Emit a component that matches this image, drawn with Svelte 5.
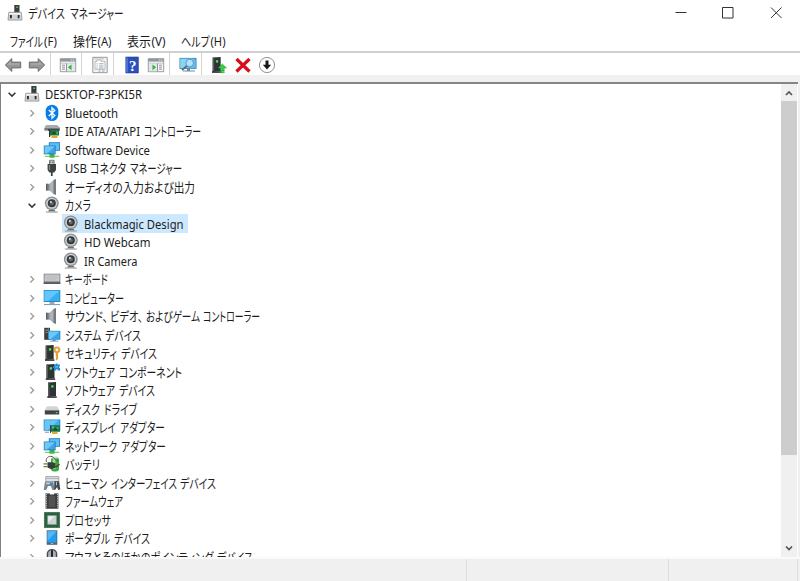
<script lang="ts">
  // [text, x offset, width]
  type Run = [string, number, number];

  interface Row {
    icon: string;
    runs: Run[];
    level?: number;
    open?: boolean;
    selected?: boolean;
  }

  const rows: Row[] = [
    { icon: 'computer-root', runs: [['DESKTOP-F3PKI5R', 0, 97]], level: 0, open: true },
    { icon: 'bluetooth', runs: [['Bluetooth', 0, 53]] },
    { icon: 'ide', runs: [['IDE ATA/ATAPI', 0, 75], ['コントローラー', 79, 57]] },
    { icon: 'network', runs: [['Software Device', 0, 85]] },
    { icon: 'usb', runs: [['USB', 0, 22], ['コネクタ', 25, 36], ['マネージャー', 65, 52]] },
    { icon: 'speaker', runs: [['オーディオの入力および出力', 0, 130]] },
    { icon: 'camera', runs: [['カメラ', 0, 26]], open: true },
    { icon: 'camera', runs: [['Blackmagic Design', 0, 99.5]], level: 2, selected: true },
    { icon: 'camera', runs: [['HD Webcam', 0, 66.5]], level: 2 },
    { icon: 'camera', runs: [['IR Camera', 0, 53.5]], level: 2 },
    { icon: 'keyboard', runs: [['キーボード', 0, 43]] },
    { icon: 'monitor', runs: [['コンピューター', 0, 59]] },
    { icon: 'speaker', runs: [['サウンド、', 0, 43], ['ビデオ、', 45, 33], ['およびゲーム', 81, 54], ['コントローラー', 138, 57]] },
    { icon: 'system', runs: [['システム', 0, 36.5], ['デバイス', 40, 36]] },
    { icon: 'security', runs: [['セキュリティ', 0, 52], ['デバイス', 56, 36]] },
    { icon: 'component', runs: [['ソフトウェア', 0, 50], ['コンポーネント', 54, 63]] },
    { icon: 'server', runs: [['ソフトウェア', 0, 50], ['デバイス', 54, 36]] },
    { icon: 'disk', runs: [['ディスク', 0, 35], ['ドライブ', 39, 33]] },
    { icon: 'display', runs: [['ディスプレイ', 0, 51], ['アダプター', 55, 45]] },
    { icon: 'network', runs: [['ネットワーク', 0, 52], ['アダプター', 56, 45]] },
    { icon: 'battery', runs: [['バッテリ', 0, 35]] },
    { icon: 'hid', runs: [['ヒューマン', 0, 42], ['インターフェイス', 46, 66], ['デバイス', 115, 36]] },
    { icon: 'firmware', runs: [['ファームウェア', 0, 58]] },
    { icon: 'cpu', runs: [['プロセッサ', 0, 46]] },
    { icon: 'portable', runs: [['ポータブル', 0, 45], ['デバイス', 49, 36]] },
    { icon: 'mouse', runs: [['マウスとそのほかのポインティング', 0, 148.5], ['デバイス', 152, 36]] },
  ];

  const menus: { runs: Run[]; width: number }[] = [
    { runs: [['ファイル', 0, 33], ['(F)', 34, 13]], width: 63 },
    { runs: [['操作', 0, 24], ['(A)', 24.5, 14]], width: 54.5 },
    { runs: [['表示', 0, 24], ['(V)', 24.5, 14]], width: 54 },
    { runs: [['ヘルプ', 0, 29], ['(H)', 29.5, 15]], width: 60 },
  ];

  const tools = [
    'back', 'forward', '|', 'tree', '|', 'properties', '|', 'help', 'action',
    '|', 'scan', '|', 'update', 'remove', 'down',
  ];
</script>

{#snippet label(runs: Run[])}
  {@const last = runs[runs.length - 1]}
  <svg class="label" width={last[1] + last[2]} height="18">
    {#each runs as [text, x, width]}
      <text
        {x}
        y="13.8"
        class:kana={text.charCodeAt(0) > 0x3000}
        textLength={width}
        lengthAdjust="spacingAndGlyphs">{text}</text>
    {/each}
  </svg>
{/snippet}

{#snippet towerShape()}
  <path fill="#303335" d="M4 .6l8-.6v14l-8 .8z" />
  <path fill="#565b5d" d="M4 .6l1.5-.1v14L4 14.8z" />
  <path fill="#202224" d="M3.3 14.3h9.4v1.5H3.3z" />
  <path fill="#45e84e" d="M7.2 3.2h2.3v2.4H7.2z" />
{/snippet}

{#snippet icon(name: string, size = 16)}
  <svg class="icon" width={size} height={size} viewBox="0 0 16 16">
    {#if name === 'computer-root'}
      <path fill="#3a3d3e" d="M7 0h5.5v8H7z" />
      <path fill="#777" d="M7 0h1v8H7z" />
      <path fill="#45d94d" d="M9.3 1.5h1.6v1.6H9.3z" />
      <path fill="#d0d3d4" stroke="#8d9193" stroke-width=".8" d="M1.8 7.3h12.4l.8 7.8H1z" />
      <path fill="#f4f4f4" d="M2.2 8h11.4l.3 1.4H2z" />
      <path fill="#26292a" d="M3 9.9h1.8v3.3H3zM10.7 9.9h1.8v3.3h-1.8z" />
    {:else if name === 'bluetooth'}
      <rect x="1.7" y="-.3" width="12.6" height="16.4" rx="6.3" fill="#087dea" />
      <path fill="none" stroke="#fff" stroke-width="1.3" d="M4.8 5l6 5.5L8 13.2V2.8l2.8 2.7-6 5.5" />
    {:else if name === 'ide'}
      <path fill="#a9acae" d="M2 2h11l3 2.5v3H.5v-3z" />
      <path fill="#777b7d" d="M.5 5h15v2.5H.5z" />
      <path fill="#35393b" d="M4 6.2h11.5v1.5H4z" />
      <path fill="#137b42" d="M5.5 7.5H15v5H5.5z" />
      <path fill="#0b5430" d="M8.5 8.8h3v2.4h-3z" />
      <path fill="#65b673" d="M12.5 8.5h1.3v2.8h-1.3z" />
      <path fill="#e9a52a" d="M7.5 12.5h6V15h-6z" />
      <path fill="#333" d="M5 7h1.2v7H5z" />
    {:else if name === 'network'}
      <path fill="#75cd65" d="M.8 13.7h14.4v1.2H.8z" />
      <path fill="#3db54a" d="M5.5 11h5v4.7h-5z" />
      <path fill="#2383c4" d="M4.8.2H16v8.6H4.8z" />
      <path fill="#5fbdf2" d="M5.7 1.1h9.5V8H5.7z" />
      <path fill="#1d75b5" d="M-.2 3.5h11.8v8.8H-.2z" />
      <path fill="#3da6ea" d="M.6 4.3h10.2v7.2H.6z" />
      <path fill="#70c7f6" d="M.6 4.3h10.2L3 11.5H.6z" />
    {:else if name === 'usb'}
      <path fill="#e5e5e5" stroke="#56595a" stroke-width=".8" d="M5.5.3h4.6v4H5.5z" />
      <path fill="#333" d="M6.4 1.6h.9v1.3h-.9zM8.4 1.6h.9v1.3h-.9z" />
      <path fill="#3e4243" d="M3.6 4h8.4v6l-1.8 2.5H5.4L3.6 10z" />
      <path fill="#7b8082" d="M4.8 5h1.4v5.5L4.8 9.4z" />
      <path fill="#343738" d="M6.9 12h1.7v4H6.9z" />
    {:else if name === 'speaker'}
      <path fill="#83888b" d="M2 4.8h4.5v6.8H2z" />
      <path fill="#5b6064" d="M2 4.8h1.5v6.8H2z" />
      <path fill="#aeb3b7" d="M5.5 4.8L10 .6v15l-4.5-4z" />
      <path fill="#747a7f" d="M9.5.9L12 0v16l-2.5-.9z" />
    {:else if name === 'camera'}
      <circle cx="7.8" cy="6.3" r="6.9" fill="#8d9091" />
      <circle cx="7.8" cy="6.3" r="5.5" fill="#d0d2d2" />
      <circle cx="7.8" cy="6.3" r="4" fill="#34393c" />
      <circle cx="7.8" cy="6.3" r="2" fill="#5d6a72" />
      <circle cx="6.8" cy="5.1" r="1" fill="#d5e3e9" />
      <path fill="#6c7071" d="M5 13h5.6l1 1.4H4z" />
      <path fill="#9c9e9f" d="M1.8 14.5h12v1.1h-12z" />
    {:else if name === 'keyboard'}
      <path fill="#777c80" d="M-.3 2.7h16.6v10.2H-.3z" />
      <path fill="#c9cccf" d="M.5 3.4h15v7H.5z" />
      <path stroke="#a5a9ad" stroke-width=".7" stroke-dasharray="1.3 .6" d="M1.5 5h13M1.5 6.9h13M3 8.8h10" />
      <path fill="#53585c" d="M-.3 11.4h16.6v1.5H-.3z" />
    {:else if name === 'monitor'}
      <path fill="#2785bf" d="M-.3 0h16.6v12H-.3z" />
      <path fill="#37aef1" d="M.5.8h15v10.3H.5z" />
      <path fill="#63c5fa" d="M.5.8h15L4 11.1H.5z" />
      <path fill="#9aaab5" d="M5.5 12h5v2h-5z" />
      <path fill="#7696ab" d="M0 14.1h16v1H0z" />
    {:else if name === 'system'}
      <path fill="#3a3e41" d="M.2.8H6v12H.2z" />
      <path fill="#8c9295" d="M1.2 2.8h3.8v1H1.2zM1.2 5h3.8v.8H1.2z" />
      <path fill="#54d34f" d="M3.8 1.4H5v1H3.8z" />
      <path fill="#217db7" d="M4 3.8h12.3v8.9H4z" />
      <path fill="#35a7e9" d="M4.8 4.6h10.7v7.3H4.8z" />
      <path fill="#6ac7f7" d="M4.8 4.6h10.7L7 11.9H4.8z" />
      <path fill="#5b8ba8" d="M8.5 12.7h3v1h3v.8H6v-.8h2.5z" />
    {:else if name === 'security'}
      <g transform="translate(-2.3)">{@render towerShape()}</g>
      <circle cx="12.9" cy="4.8" r="2.4" fill="none" stroke="#dfa03a" stroke-width="2" />
      <path fill="#dfa03a" d="M11.8 7.2h2.2v6.9L12.7 15.4l-1.1-1 .8-1-.8-.9.8-.8-.7-.8z" />
    {:else if name === 'component'}
      <g transform="translate(-1.5)">{@render towerShape()}</g>
      <path fill="#2389d6" d="M10 .6h1.7V-.6h1.8V.6h2.4v1.8h-.9v1.3h1.1v2.7h-2.4V5.2h-1.4v1.2H10V4.1H8.7V2.4H10z" />
      <path fill="#7fc2f1" d="M11.3 2.2h2.5v1.3h-2.5z" />
    {:else if name === 'server'}
      {@render towerShape()}
    {:else if name === 'disk'}
      <path fill="#d2d5d6" d="M3 5.3h10l2.5 4H.5z" />
      <path fill="#3f4345" d="M.8 9.2h14.4v4.3H.8z" />
      <path fill="#7e8385" d="M1.3 9.2h13.4v.8H1.3z" />
      <path fill="#54d957" d="M11.8 11h1.7v1.2h-1.7z" />
    {:else if name === 'display'}
      <path fill="#2380ba" d="M-.3.5h16.6v11.2H-.3z" />
      <path fill="#3caef0" d="M.5 1.3h15v9.6H.5z" />
      <path fill="#69c7f8" d="M.5 1.3h14L4 10.9H.5z" />
      <path fill="#167449" d="M6.5 6.3H16v6.5H6.5z" />
      <path fill="#69b880" d="M8 7.5h2.4v2H8zM12.3 8.3h2.5v1.2h-2.5z" />
      <path fill="#0d4e30" d="M9.8 9.3h3v2.2h-3z" />
      <path fill="#dfab38" d="M8 12.8h5.6v2.2H8z" />
      <path fill="#343a3d" d="M6 6h.9v8H6z" />
      <path fill="#7896a8" d="M1 12.7h4v1H1z" />
    {:else if name === 'battery'}
      <rect x="7" y="1.2" width="8" height="14.2" rx="3" fill="#38ad3c" />
      <path fill="#a5e195" d="M8.8 2.6h2.6v10.5H8.8z" />
      <path fill="#d9dedb" d="M8.3.4h5v2h-5z" />
      <path fill="none" stroke="#535856" d="M2.5 6C1 3 4.7-1 8.3.7s2.2 4.8 6 3.8" />
      <path fill="#383e3b" d="M3.5 6.2h4L11.4 7v4.8l-4.2 1.5L3.5 11.5z" />
      <path stroke="#7f7640" stroke-width="1.3" d="M-.5 7.8h4M-.5 10.6h4" />
      <path fill="none" stroke="#444" stroke-width="1.4" d="M10 10.5h2.5l3-2.4" />
    {:else if name === 'hid'}
      <path fill="#dde1e4" stroke="#8a9299" stroke-width=".8" d="M1.8 1.6h13v5h-13z" />
      <path stroke="#a3abb2" stroke-width=".8" d="M2.5 3.5H14" />
      <path fill="#7b858d" d="M1 6.7h8.3l1.4 8.3H8.5l-1.7-4H4L2.2 15H-.3z" />
      <path fill="#c6d0d7" d="M2 7.6h6v1.6H2z" />
      <circle cx="6.9" cy="9" r="1.2" fill="#168de0" />
      <path fill="#424950" d="M10.3 6.2h4.8l1.2 8.2-2.2.6-1-3-2 3-1-.6z" />
      <path fill="#b6bfc5" d="M12 7h1v3.2h-1z" />
    {:else if name === 'firmware'}
      <path fill="#3c3d3d" d="M1.6.3h3.7l1 1.2h3.4l1-1.2h3.7v15.4H1.6z" />
      <path stroke="#c2c3c3" stroke-width="1" stroke-dasharray="1 .8" d="M2.5 1v14.2M13.5 1v14.2" />
      <path fill="#525252" d="M4.7 3h6.6v11H4.7z" />
      <path stroke="#969696" stroke-width=".7" d="M2 .5h3.3l1.2 1.2h3L10.7.5H14" fill="none" />
    {:else if name === 'cpu'}
      <path fill="#28614a" d="M0 0h16v16H0z" />
      <path fill="none" stroke="#b7ad68" stroke-width=".7" stroke-dasharray=".8 .7" d="M.3.3h15.4v15.4H.3z" />
      <path fill="#d0d3cf" stroke="#9ba99f" stroke-width=".5" d="M3.6 3.6h8.8v8.8H3.6z" />
      <path fill="#eee" d="M4.2 4.2h6.5l-6.5 6z" />
    {:else if name === 'portable'}
      <path fill="#4f6577" d="M2.7.3h10.6v14.5H2.7z" />
      <path fill="#209df0" d="M3.5 1.3h9v11.3h-9z" />
      <path fill="#52b9f8" d="M3.5 1.3h9l-9 9.7z" />
      <path fill="#c6d1d9" d="M6.8 13.3h2.4v.7H6.8z" />
    {:else if name === 'mouse'}
      <rect x="2.7" y="0" width="10.6" height="17" rx="5" fill="#454c52" />
      <path fill="#a7b0b8" d="M4.3 3L7 1v7H4zM9 1l2.7 2 .2 5H9z" />
      <path fill="#24282b" d="M7 1.5h2v6H7z" />
    {:else if name === 'back' || name === 'forward'}
      <g transform={name === 'forward' ? 'matrix(-1 0 0 1 16 0)' : undefined}>
        <path fill="#969696" stroke="#6c6c6c" d="M.3 8l6.5-6.4v3.5h8.9v5.8H6.8v3.5z" stroke-linejoin="round" />
        <path fill="#aaa" d="M2.5 7.7L5.8 4.5v1.7h8.5v1.5z" />
      </g>
    {:else if name === 'tree' || name === 'action'}
      <path fill="#f7f8f8" stroke="#7e868d" stroke-width=".8" d="M.3 1.7h15.4v13H.3z" />
      <path fill="#8c97a1" d="M.3 1.7h15.4v2.9H.3z" />
      <path fill="#fff" d="M11.2 2.5h1v1h-1zM13.2 2.5h1v1h-1z" />
      <path stroke="#b0b6bb" stroke-width=".8" d="M1 6.2h14" />
      {#if name === 'tree'}
        <path fill="#e2e7ea" d="M7 6.7h8v7.5H7z" />
        <path stroke="#8b969f" d="M2 8.2h3M2 10.2h3M2 12.2h3M6.5 6.5v8" />
        <path fill="#28b42c" d="M11.5 7.5v5.7L8 10.3z" />
      {:else}
        <path fill="#e2e7ea" d="M1 6.7h8v7.5H1z" />
        <path stroke="#8b969f" d="M11 8.2h3M11 10.2h3M11 12.2h3M9.5 6.5v8" />
        <path fill="#28b42c" d="M4.5 7.5v5.7L8 10.3z" />
      {/if}
    {:else if name === 'properties'}
      <path fill="#f5f5f5" stroke="#8a8d90" stroke-width=".9" d="M.8.3h14.4v15.4H.8z" />
      <path fill="#fff" stroke="#a3a7aa" stroke-width=".8" d="M3 4.3h2V3h4v1.3h4v8H3z" />
      <path stroke="#8b9ca8" stroke-width=".9" d="M4.5 6.8h1.2M7 6.8h4.5M4.5 9h1.2M7 9h4.5M4.5 11h1.2M7 11h4.5M6.5 14h2M10 14h2.5" />
      <path fill="#b9bec2" d="M2 1.5h10v.9H2z" />
    {:else if name === 'help'}
      <path fill="#2851bd" stroke="#243b88" stroke-width=".6" d="M1.8 0h12.6v16H1.8z" />
      <path fill="#547bd6" d="M2.2.5h1.6v15H2.2z" />
      <text class="question" x="5" y="13.5">?</text>
    {:else if name === 'scan'}
      <path fill="#3483b1" d="M-.5.9h17v11h-17z" />
      <path fill="#65bce9" d="M.3 1.7h15.4v9.4H.3z" />
      <path fill="#8dd3f4" d="M.3 1.7h13L4 11.1H.3z" />
      <path fill="#6e8b9d" d="M7 12h3v1.5h5v1H3v-1h4z" />
      <path stroke="#536b79" stroke-width="1.7" d="M7.2 8.5L2 13.2" />
      <circle cx="9.7" cy="6" r="3.8" fill="#b5e1f8" stroke="#4e98c2" stroke-width=".9" />
    {:else if name === 'update'}
      <g transform="translate(-2.3)">{@render towerShape()}</g>
      <path fill="#32cf40" stroke="#168f28" stroke-width=".4" d="M11.3 6.9l4.3 4.1h-2.3v1.5h-4V11H7zM9.3 13.1h4v1h-4zM9.3 14.7h4v1.1h-4z" />
    {:else if name === 'remove'}
      <path fill="none" stroke="#d90d19" stroke-width="3.2" d="M1.5 2l13 12.5M14.5 2l-13 12.5" />
    {:else if name === 'down'}
      <circle cx="8" cy="8" r="7.6" fill="#fff" stroke="#777" stroke-width=".8" />
      <path fill="#181818" d="M6.5 3.6h3v4.2h2.7L8 12.4 3.8 7.8h2.7z" />
    {/if}
  </svg>
{/snippet}

<div class="window">
  <header class="titlebar">
    {@render icon('computer-root')}
    {@render label([['デバイス', 0, 37], ['マネージャー', 42, 53.5]])}
    <div class="controls">
      <svg width="46" height="26"><path d="M17.5 12.5h11" /></svg>
      <svg width="48" height="26"><path d="M18.5 7.5h10.5v10.5h-10.5z" /></svg>
      <svg width="48" height="26"><path d="M19 7.5l10.5 10.5M29.5 7.5L19 18" /></svg>
    </div>
  </header>

  <nav class="menubar">
    {#each menus as menu}
      <div style:width="{menu.width}px" class="menu">{@render label(menu.runs)}</div>
    {/each}
  </nav>

  <div class="toolbar">
    {#each tools as tool}
      {#if tool === '|'}
        <span class="separator"></span>
      {:else}
        <span class="tool">{@render icon(tool)}</span>
      {/if}
    {/each}
  </div>

  <main class="pane">
    <div class="tree">
      {#each rows as row}
        <div class="row level{row.level ?? 1}">
          <span class="chevron" class:open={row.open}>
            {#if row.level !== 2}
              <svg width="10" height="10" viewBox="0 0 10 10">
                <path d={row.open ? 'M1.6 3.7L5 7.1l3.4-3.4' : 'M3.4 2.1L6.6 5.3 3.4 8.5'} />
              </svg>
            {/if}
          </span>
          <div class="item" class:selected={row.selected}>
            {@render icon(row.icon)}
            {@render label(row.runs)}
          </div>
        </div>
      {/each}
    </div>

    <div class="scrollbar">
      <svg width="16" height="17"><path d="M5 11l3-3 3 3" /></svg>
      <div class="thumb"></div>
      <svg width="16" height="17"><path d="M5 6.5l3 3 3-3" /></svg>
    </div>
  </main>

  <footer class="statusbar">
    <div></div>
    <div></div>
    <div></div>
  </footer>
</div>

<style>
  :global(body) {
    margin: 0;
    overflow: hidden;
  }

  .window {
    display: flex;
    flex-direction: column;
    width: 800px;
    height: 581px;
    overflow: hidden;
    background: #f0f0f0;
    font: 12.5px 'Noto Sans', 'Noto Sans CJK JP', sans-serif;
  }

  svg {
    display: block;
    flex: none;
  }

  .icon,
  .label {
    overflow: visible;
  }

  .label text {
    fill: #1c1c1c;
    font-feature-settings: 'palt';
  }

  .label .kana {
    font-family: 'Noto Sans CJK JP', sans-serif;
    font-size: 13px;
  }

  .titlebar {
    display: flex;
    align-items: center;
    height: 26px;
    padding-left: 7px;
    background: #fff;
  }

  .titlebar .label {
    margin-left: 5px;
  }

  .controls {
    display: flex;
    margin-left: auto;
  }

  .controls path {
    fill: none;
    stroke: #333;
    stroke-width: 1;
  }

  .menubar {
    display: flex;
    height: 25px;
    padding-left: 9.5px;
    border-bottom: 2px solid #d0d0d0;
    background: #fff;
  }

  .menu {
    display: flex;
    align-items: center;
    padding-top: 4px;
    box-sizing: border-box;
  }

  .toolbar {
    display: flex;
    align-items: center;
    height: 22px;
    padding-left: 0.5px;
    margin-bottom: 7px;
    background: #fff;
  }

  .tool {
    display: flex;
    justify-content: center;
    width: 24px;
    padding-top: 1px;
  }

  .separator {
    width: 6.8px;
    height: 22px;
    margin-left: 1px;
    border-left: 1px solid #d4d4d4;
    box-sizing: border-box;
  }

  .question {
    fill: #fff;
    font: bold 15px 'Liberation Serif', serif;
  }

  .pane {
    display: flex;
    height: 475px;
    margin-right: 2px;
    border-top: 2px solid #858585;
    border-left: 1.5px solid #808080;
    box-sizing: border-box;
    background: #fff;
  }

  .tree {
    flex: 1;
    overflow: hidden;
    padding-top: 0.8px;
  }

  .row {
    display: flex;
    height: 18.52px;
  }

  .level0 {
    padding-left: 6px;
  }

  .level1 {
    padding-left: 25.5px;
  }

  .level2 {
    padding-left: 45px;
  }

  .chevron {
    display: flex;
    align-items: center;
    width: 16px;
  }

  .chevron path {
    fill: none;
    stroke: #999;
    stroke-width: 1.3;
  }

  .chevron.open path {
    stroke: #333;
    stroke-width: 1.5;
  }

  .item {
    display: flex;
    align-items: center;
    gap: 5.2px;
    padding: 0 4px 0 1px;
  }

  .selected {
    background: #cce8ff;
  }

  .scrollbar {
    display: flex;
    flex-direction: column;
    width: 16px;
    margin-right: 1px;
    background: #f0f0f0;
  }

  .scrollbar path {
    fill: none;
    stroke: #555;
    stroke-width: 1.7;
  }

  .scrollbar svg:last-child {
    margin-top: auto;
  }

  .thumb {
    height: 354px;
    background: #cdcdcd;
  }

  .statusbar {
    display: grid;
    grid-template-columns: 467px 202px 129px;
    flex: 1;
    border-top: 2px solid #fafafa;
  }

  .statusbar div {
    border-right: 1px solid #dedede;
  }
</style>
